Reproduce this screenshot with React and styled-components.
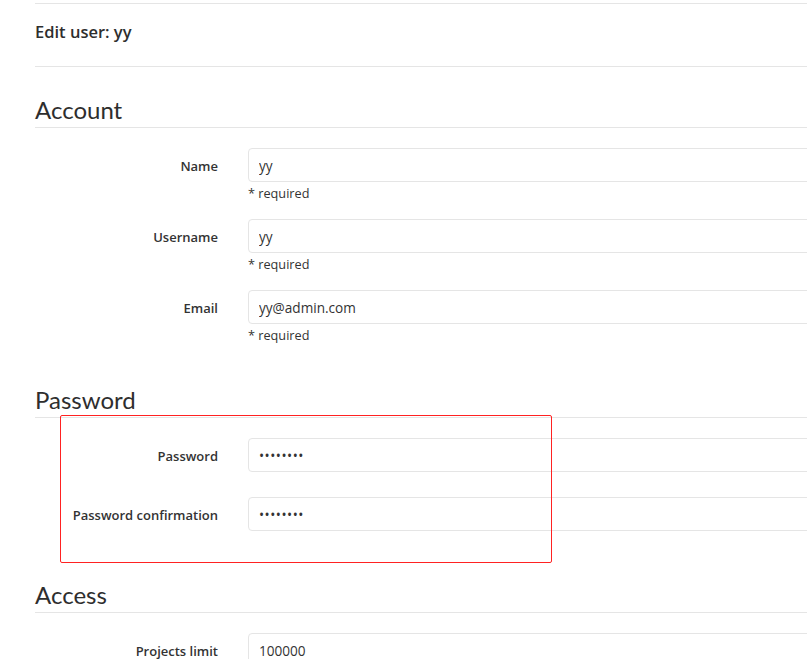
import React from "react";
import styled, { createGlobalStyle } from "styled-components";

const GlobalStyle = createGlobalStyle`
  html, body {
    margin: 0;
    padding: 0;
    overflow: hidden;
    background: #fff;
  }
  body {
    font-family: "Open Sans", "Noto Sans", "Liberation Sans", sans-serif;
    color: #2e2e2e;
  }
  * { box-sizing: border-box; }
`;

const Page = styled.div`
  width: 1200px;
  padding-left: 35px;
  padding-top: 3px;
`;

const Header = styled.div`
  border-top: 1px solid #e5e5e5;
  border-bottom: 1px solid #e5e5e5;
  padding: 16px 0 22px;
`;

const Title = styled.h3`
  margin: 0;
  font-size: 16.5px;
  line-height: 24px;
  font-weight: 600;
  color: #2e2e2e;
`;

const Body = styled.div`
  padding-top: 4px;
`;

const Section = styled.fieldset`
  position: relative;
  border: 0;
  margin: 0;
  padding: 0;
  min-width: 0;
`;

const Legend = styled.div`
  margin: 24px 0 20px;
  padding-top: 1px;
  padding-bottom: 3px;
  font-family: Lato, "Open Sans", sans-serif;
  font-size: 24px;
  line-height: 28px;
  font-weight: 400;
  color: #2e2e2e;
  border-bottom: 1px solid #e5e5e5;
`;

const FormGroup = styled.div`
  display: grid;
  grid-template-columns: 183px 1fr;
  column-gap: 30px;
  margin-bottom: ${(p) => (p.$help ? "17px" : "25px")};
`;

const Label = styled.label`
  height: 34px;
  padding-top: 2px;
  text-align: right;
  font-size: 13px;
  line-height: 32px;
  font-weight: 600;
  color: #333;
`;

const Field = styled.div`
  display: flex;
  flex-direction: column;
`;

const Input = styled.input`
  height: 34px;
  width: 100%;
  border: 1px solid #e5e5e5;
  border-radius: 4px;
  padding: 1px 10px 0;
  font-family: inherit;
  font-size: 13.6px;
  color: #333;
  background: #fff;
  outline: none;
  letter-spacing: ${(p) => (p.type === "password" ? "0.5px" : "normal")};
`;

const Help = styled.span`
  margin-top: 2px;
  font-size: 12.7px;
  line-height: 18px;
  color: #333;
`;

const Highlight = styled.div`
  position: absolute;
  left: 25px;
  top: 54px;
  width: 492px;
  height: 148px;
  border: 1px solid #f22;
  border-radius: 2px;
  pointer-events: none;
`;

const Row = ({ label, value, type = "text", help }) => (
  <FormGroup $help={!!help}>
    <Label>{label}</Label>
    <Field>
      <Input type={type} defaultValue={value} readOnly />
      {help && <Help>{help}</Help>}
    </Field>
  </FormGroup>
);

export default function App() {
  return (
    <>
      <GlobalStyle />
      <Page>
        <Header>
          <Title>Edit user: yy</Title>
        </Header>
        <Body>
          <Section>
            <Legend>Account</Legend>
            <Row label="Name" value="yy" help="* required" />
            <Row label="Username" value="yy" help="* required" />
            <Row label="Email" value="yy@admin.com" help="* required" />
          </Section>
          <Section>
            <Legend>Password</Legend>
            <Row label="Password" type="password" value="12345678" />
            <Row label="Password confirmation" type="password" value="12345678" />
            <Highlight />
          </Section>
          <Section>
            <Legend>Access</Legend>
            <Row label="Projects limit" value="100000" />
          </Section>
        </Body>
      </Page>
    </>
  );
}
